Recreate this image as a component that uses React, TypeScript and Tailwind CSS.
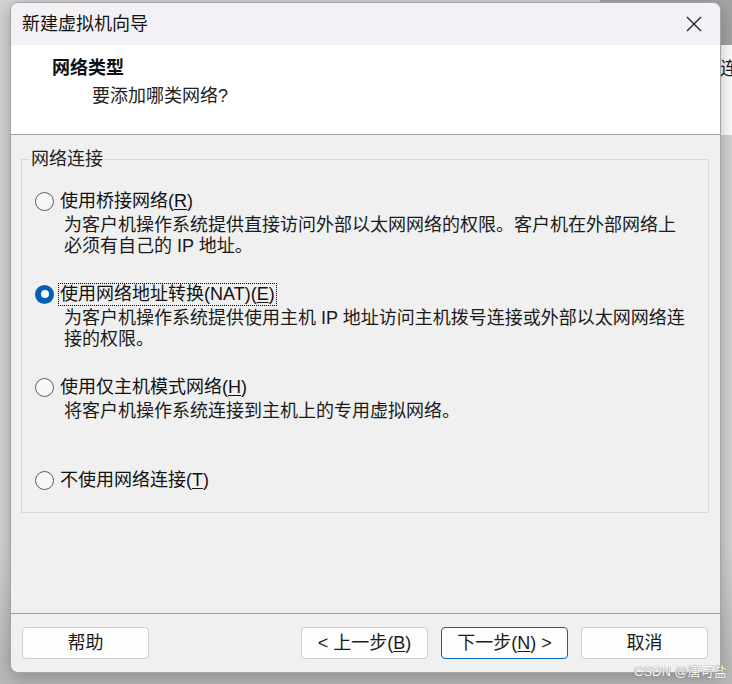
import React from 'react';

type Option = {
  key: string;
  label: string;
  mnemonic: string;
  desc: string[];
  checked?: boolean;
};

const options: Option[] = [
  {
    key: 'bridge',
    label: '使用桥接网络(',
    mnemonic: 'R',
    desc: ['为客户机操作系统提供直接访问外部以太网网络的权限。客户机在外部网络上', '必须有自己的 IP 地址。'],
  },
  {
    key: 'nat',
    label: '使用网络地址转换(NAT)(',
    mnemonic: 'E',
    desc: ['为客户机操作系统提供使用主机 IP 地址访问主机拨号连接或外部以太网网络连', '接的权限。'],
    checked: true,
  },
  {
    key: 'host',
    label: '使用仅主机模式网络(',
    mnemonic: 'H',
    desc: ['将客户机操作系统连接到主机上的专用虚拟网络。'],
  },
  { key: 'none', label: '不使用网络连接(', mnemonic: 'T', desc: [] },
];

function Radio({ checked }: { checked?: boolean }) {
  if (checked) {
    return (
      <div className="flex h-[19px] w-[19px] items-center justify-center rounded-full bg-[#005fb8]">
        <div className="h-[8px] w-[8px] rounded-full bg-white" />
      </div>
    );
  }
  return <div className="h-[19px] w-[19px] rounded-full border-[1.5px] border-[#5d5d5d] bg-[#f7f7f7]" />;
}

function OptionBlock({ opt, last }: { opt: Option; last?: boolean }) {
  return (
    <div className={last ? 'flex h-6 flex-col' : 'flex h-[93px] flex-col'}>
      <div className="flex h-6 items-center">
        <Radio checked={opt.checked} />
        <div
          className={
            opt.checked
              ? 'ml-[4px] flex h-[23px] items-center border border-dotted border-black px-[1px] text-[18px] leading-[21px] text-[#111]'
              : 'ml-[6px] flex h-[23px] items-center text-[18px] leading-[21px] text-[#111]'
          }
        >
          {opt.label}
          <span className="underline underline-offset-2">{opt.mnemonic}</span>)
        </div>
      </div>
      {opt.desc.length > 0 && (
        <div className="mt-[2px] ml-[29px] text-[18px] leading-[21px] text-[#1a1a1a]">
          {opt.desc.map((line) => (
            <div key={line}>{line}</div>
          ))}
        </div>
      )}
    </div>
  );
}

function Button({ children, primary }: { children: React.ReactNode; primary?: boolean }) {
  return (
    <button
      className={
        primary
          ? 'flex h-[32px] w-[127px] items-center justify-center rounded-[4px] border border-[#0067c0] bg-[#fdfdfd] text-[18px] text-[#1a1a1a]'
          : 'flex h-[32px] w-[127px] items-center justify-center rounded-[4px] border border-[#d0d0d0] bg-[#fdfdfd] text-[18px] text-[#1a1a1a]'
      }
    >
      {children}
    </button>
  );
}

export default function App() {
  return (
    <div className="relative h-[684px] w-[732px] overflow-hidden bg-[#d4d4d4] font-['Liberation_Sans','Noto_Sans_CJK_SC',sans-serif]">
      {/* window behind the dialog */}
      <div className="absolute left-[600px] top-0 h-[45px] w-[140px] bg-[#a5a5a5]" />
      <div className="absolute left-[600px] top-[45px] flex h-[90px] w-[132px] items-start justify-end overflow-hidden bg-white pt-[12px] text-[18px] leading-6 text-[#222]">
        <span className="-mr-[6px]">连</span>
      </div>
      <div className="absolute left-0 top-0 h-[684px] w-[732px] bg-gradient-to-b from-transparent from-80% to-[#b8b8b8]" />

      <div className="relative ml-[10px] mt-[2px] flex h-[671px] w-[711px] flex-col overflow-hidden rounded-[8px] border border-[#a4a4a4] bg-[#f0f0f0] shadow-[0_4px_18px_rgba(0,0,0,0.28)]">
        {/* title bar */}
        <div className="flex h-[42px] items-center justify-between bg-[#f3f1f5] pl-[11px] pr-[16px]">
          <span className="text-[18px] text-[#111]">新建虚拟机向导</span>
          <svg width="18" height="18" viewBox="0 0 18 18" className="mr-[1px]">
            <path d="M2 2 L16 16 M16 2 L2 16" stroke="#222" strokeWidth="1.4" fill="none" />
          </svg>
        </div>

        {/* header */}
        <div className="h-[90px] border-b border-[#a0a0a0] bg-white pl-[41px] pt-[11px]">
          <div className="text-[18px] font-bold leading-6 text-[#111]">网络类型</div>
          <div className="mt-[4px] pl-[40px] text-[18px] leading-6 text-[#222]">要添加哪类网络?</div>
        </div>

        {/* body */}
        <div className="flex-1 px-[10px] pt-[12px]">
          <fieldset className="mr-[1px] border border-[#d8d8d8] pb-[20px] pl-[13px] pt-[18px]">
            <legend className="-ml-[5px] px-[1px] text-[18px] leading-6 text-[#222]">网络连接</legend>
            {options.map((o, i) => (
              <OptionBlock key={o.key} opt={o} last={i === options.length - 1} />
            ))}
          </fieldset>
        </div>

        {/* footer */}
        <div className="flex h-[59px] items-start justify-between border-t border-[#a0a0a0] pl-[11px] pr-[12px] pt-[13px]">
          <Button>帮助</Button>
          <div className="flex gap-[13px]">
            <Button>
              &lt; 上一步(<span className="underline underline-offset-2">B</span>)
            </Button>
            <Button primary>
              下一步(<span className="underline underline-offset-2">N</span>) &gt;
            </Button>
            <Button>取消</Button>
          </div>
        </div>
      </div>

      {/* watermark */}
      <div className="absolute left-[634px] top-[662px] text-[13px] text-white [text-shadow:0_0_1px_#777,0_0_1px_#777]">
        CSDN @唐可盐
      </div>
    </div>
  );
}
